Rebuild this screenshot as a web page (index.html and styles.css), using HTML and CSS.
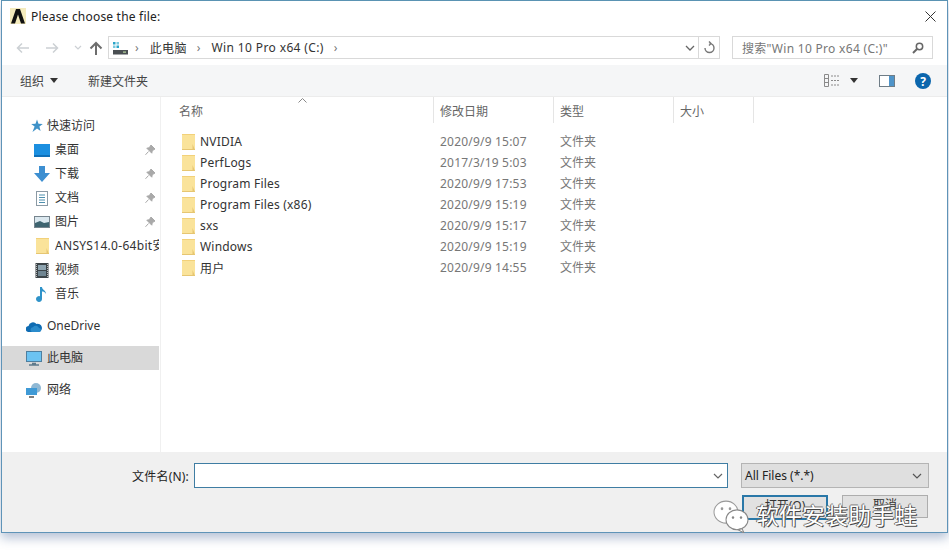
FILE: index.html
```html
<!DOCTYPE html>
<html lang="en">
<head>
    <meta charset="UTF-8">
    <meta name="viewport" content="width=device-width, initial-scale=1.0">
    <title>Please choose the file:</title>
    <link rel="stylesheet" href="styles.css">
</head>
<body>
<svg class="defs" width="0" height="0">
    <symbol id="folder" viewBox="0 0 13 16">
        <rect x="0" y="0" width="13" height="16" fill="#fae39a"/>
        <rect x="0" y="0" width="13" height="1" fill="#f2d17a"/>
        <path d="M10.500 16V10l2.500 6z" fill="#e6c672"/>
        <rect x="0" y="15" width="13" height="1" fill="#e6c672"/>
    </symbol>
    <symbol id="pin" viewBox="0 0 12 12">
        <path d="M7 1l4 4-1 .6-1.800 1.200-.4 2.400L2.800 4.200l2.400-.4L6.400 2zM4.500 7.500L1.500 10.800" fill="#a9a9a9" stroke="#a9a9a9" stroke-width="1"/>
    </symbol>
</svg>

<div class="window">
    <div class="titlebar">
        <svg class="app-icon" width="16" height="16" viewBox="0 0 16 16">
            <rect width="16" height="16" fill="#f4ebbd"/>
            <path d="M1 15.500L6 1h4l5 14.500h-4L8 6.500 5 15.500z" fill="#111"/>
        </svg>
        <span class="title">Please choose the file:</span>
        <svg class="close" width="11" height="11" viewBox="0 0 11 11">
            <path d="M.5.500l10 10M10.500.500l-10 10" stroke="#333" stroke-width="1" fill="none"/>
        </svg>
    </div>

    <div class="navrow">
        <div class="nav-buttons">
            <svg width="14" height="12" viewBox="0 0 14 12"><path d="M13 6H2M6 1.500L1.500 6 6 10.500" stroke="#ccd0d4" stroke-width="1.500" fill="none"/></svg>
            <svg width="14" height="12" viewBox="0 0 14 12"><path d="M1 6h11M8 1.500L12.500 6 8 10.500" stroke="#ccd0d4" stroke-width="1.500" fill="none"/></svg>
            <svg width="8" height="6" viewBox="0 0 8 6"><path d="M1 1l3 3 3-3" stroke="#ccd0d4" stroke-width="1.200" fill="none"/></svg>
            <svg class="up" width="14" height="14" viewBox="0 0 14 14"><path d="M7 14V2M1.500 7.500L7 2l5.500 5.500" stroke="#6d6d6d" stroke-width="2" fill="none"/></svg>
        </div>
        <div class="address">
            <svg class="drive" width="16" height="14" viewBox="0 0 16 14">
                <rect x="1" y="1" width="2.500" height="2.500" fill="#2aa5c9"/>
                <rect x="4.500" y="1" width="2.500" height="2.500" fill="#7cc9dd"/>
                <rect x="1" y="4.500" width="2.500" height="2.500" fill="#7cc9dd"/>
                <rect x="4.500" y="4.500" width="2.500" height="2.500" fill="#2aa5c9"/>
                <rect x="1" y="9" width="15" height="4.500" fill="#4a4f52"/>
                <rect x="11" y="10.500" width="3" height="1.200" fill="#b8d8a0"/>
            </svg>
            <span class="crumb-sep">›</span>
            <span class="crumb">此电脑</span>
            <span class="crumb-sep">›</span>
            <span class="crumb">Win 10 Pro x64 (C:)</span>
            <span class="crumb-sep">›</span>
            <span class="address-fill"></span>
            <svg class="chev" width="10" height="6" viewBox="0 0 10 6"><path d="M1 1l4 4 4-4" stroke="#666" stroke-width="1.300" fill="none"/></svg>
            <span class="refresh">
                <svg width="12" height="13" viewBox="0 0 12 13"><path d="M6.500 2.500A4.500 4.500 0 1 1 2 7M6 .5l2 2-2 2" stroke="#777" stroke-width="1.400" fill="none"/></svg>
            </span>
        </div>
        <div class="search">
            <span class="search-text">搜索"Win 10 Pro x64 (C:)"</span>
            <svg width="12" height="12" viewBox="0 0 12 12"><circle cx="7.500" cy="4.500" r="3.200" stroke="#666" stroke-width="1.500" fill="none"/><path d="M5 7l-4 4" stroke="#666" stroke-width="2"/></svg>
        </div>
    </div>

    <div class="toolbar">
        <span class="tool">组织</span>
        <span class="tool-arrow"></span>
        <span class="tool tool-new">新建文件夹</span>
        <span class="toolbar-fill"></span>
        <svg class="view-icon" width="16" height="13" viewBox="0 0 16 13">
            <path d="M.5.500h4v12h-4zM.5 4.500h4M.5 8.500h4" stroke="#8a8a8a" fill="none"/>
            <path d="M7 2h9M7 6.500h9M7 11h9" stroke="#8a8a8a" stroke-dasharray="2 1" fill="none"/>
        </svg>
        <span class="tool-arrow view-arrow"></span>
        <svg class="pane-icon" width="16" height="12" viewBox="0 0 16 12">
            <rect x=".5" y=".5" width="15" height="11" fill="#fff" stroke="#6f7d87"/>
            <rect x="10" y="1" width="5" height="10" fill="#4f94c9"/>
        </svg>
        <svg class="help-icon" width="16" height="16" viewBox="0 0 16 16">
            <circle cx="8" cy="8" r="8" fill="#0b66ad"/>
            <text x="8" y="12.500" text-anchor="middle" class="help-mark">?</text>
        </svg>
    </div>

    <div class="main">
        <nav class="sidebar">
            <div class="side-item top">
                <svg class="star" width="14" height="14" viewBox="0 0 14 14"><path d="M8 .5l1.500 4.200 4.300.2-3.400 2.700 1.200 4.300L8 9.500l-4.500 3.500 2.100-5.400L2.200 4.900l4.300-.2z" fill="#3f92c8"/></svg>
                <span>快速访问</span>
            </div>
            <div class="side-item sub">
                <svg width="16" height="13" viewBox="0 0 16 13"><rect width="16" height="13" fill="#1b8fe0"/><rect y="11" width="16" height="2" fill="#0e6fb8"/></svg>
                <span>桌面</span>
                <svg class="pin"><use href="#pin"/></svg>
            </div>
            <div class="side-item sub">
                <svg width="16" height="16" viewBox="0 0 16 16"><path d="M5 0h6v7h5l-8 9-8-9h5z" fill="#3d8fd1"/></svg>
                <span>下载</span>
                <svg class="pin"><use href="#pin"/></svg>
            </div>
            <div class="side-item sub">
                <svg width="16" height="15" viewBox="0 0 16 15"><rect x="2.500" y=".5" width="11" height="14" fill="#fff" stroke="#8b9aa5"/><path d="M5 4h6M5 6.500h6M5 9h6M5 11.500h6" stroke="#4d8fae"/></svg>
                <span>文档</span>
                <svg class="pin"><use href="#pin"/></svg>
            </div>
            <div class="side-item sub">
                <svg width="16" height="13" viewBox="0 0 16 13"><rect x=".5" y=".5" width="15" height="11" fill="#dbe8ef" stroke="#77858e"/><path d="M1 7l5-2 4 2 5-1v5H1z" fill="#3e6470"/></svg>
                <span>图片</span>
                <svg class="pin"><use href="#pin"/></svg>
            </div>
            <div class="side-item sub">
                <svg width="13" height="16" class="side-folder"><use href="#folder"/></svg>
                <span class="clip">ANSYS14.0-64bit安</span>
            </div>
            <div class="side-item sub">
                <svg width="16" height="15" viewBox="0 0 16 15"><rect x="1.500" width="13" height="15" fill="#3c4448"/><rect x="4" y="2" width="8" height="5" fill="#8ea4b0"/><rect x="4" y="8" width="8" height="5" fill="#6f8591"/><path d="M2.500 1v13M13.500 1v13" stroke="#bbb" stroke-dasharray="1 1"/></svg>
                <span>视频</span>
            </div>
            <div class="side-item sub">
                <svg width="16" height="17" viewBox="0 0 16 17"><path d="M6 1h2c0 3 4 3 4 7-1-2-2.500-2.500-4-2.500V13a3 3 0 1 1-2-2.800z" fill="#2f93c9"/></svg>
                <span>音乐</span>
            </div>
            <div class="side-item top group-gap">
                <svg width="16" height="11" viewBox="0 0 16 11"><path d="M3 11a3 3 0 0 1-.5-6A4.500 4.500 0 0 1 10.500 3 3.500 3.500 0 0 1 13 11z" fill="#0f6cb3"/><path d="M6 11a2.500 2.500 0 0 1 1-4.800 3.500 3.500 0 0 1 6 .8 2 2 0 0 1 0 4z" fill="#2b8ccc"/></svg>
                <span>OneDrive</span>
            </div>
            <div class="side-item top group-gap selected">
                <svg width="16" height="15" viewBox="0 0 16 15"><rect x=".5" y=".5" width="15" height="10" fill="#6cc3f2" stroke="#4f7f9f"/><path d="M6 12.500h4M3 14h10" stroke="#5e7a8c" stroke-width="1.500"/></svg>
                <span>此电脑</span>
            </div>
            <div class="side-item top group-gap">
                <svg width="16" height="16" viewBox="0 0 16 16"><circle cx="10" cy="6" r="5" fill="#8fb8d4"/><rect x="0" y="6" width="11" height="7" fill="#3f9ad6"/><path d="M3 15h5" stroke="#555" stroke-width="1.500"/></svg>
                <span>网络</span>
            </div>
        </nav>

        <section class="files">
            <div class="header">
                <span class="col col-name">名称</span>
                <span class="col col-date">修改日期</span>
                <span class="col col-type">类型</span>
                <span class="col col-size">大小</span>
            </div>
            <svg class="sort-arrow" width="9" height="5" viewBox="0 0 9 5"><path d="M.5 4.500l4-4 4 4" stroke="#888" fill="none"/></svg>
            <div class="rows">
                <div class="row"><span class="file-name"><svg width="13" height="16"><use href="#folder"/></svg>NVIDIA</span><span class="cell-date">2020/9/9 15:07</span><span class="cell-type">文件夹</span></div>
                <div class="row"><span class="file-name"><svg width="13" height="16"><use href="#folder"/></svg>PerfLogs</span><span class="cell-date">2017/3/19 5:03</span><span class="cell-type">文件夹</span></div>
                <div class="row"><span class="file-name"><svg width="13" height="16"><use href="#folder"/></svg>Program Files</span><span class="cell-date">2020/9/9 17:53</span><span class="cell-type">文件夹</span></div>
                <div class="row"><span class="file-name"><svg width="13" height="16"><use href="#folder"/></svg>Program Files (x86)</span><span class="cell-date">2020/9/9 15:19</span><span class="cell-type">文件夹</span></div>
                <div class="row"><span class="file-name"><svg width="13" height="16"><use href="#folder"/></svg>sxs</span><span class="cell-date">2020/9/9 15:17</span><span class="cell-type">文件夹</span></div>
                <div class="row"><span class="file-name"><svg width="13" height="16"><use href="#folder"/></svg>Windows</span><span class="cell-date">2020/9/9 15:19</span><span class="cell-type">文件夹</span></div>
                <div class="row"><span class="file-name"><svg width="13" height="16"><use href="#folder"/></svg>用户</span><span class="cell-date">2020/9/9 14:55</span><span class="cell-type">文件夹</span></div>
            </div>
        </section>
    </div>

    <div class="bottom">
        <div class="file-line">
            <label class="file-label">文件名(N):</label>
            <div class="file-input">
                <svg width="10" height="6" viewBox="0 0 10 6"><path d="M1 1l4 4 4-4" stroke="#666" stroke-width="1.200" fill="none"/></svg>
            </div>
            <div class="filter">
                <span>All Files (*.*)</span>
                <svg width="10" height="6" viewBox="0 0 10 6"><path d="M1 1l4 4 4-4" stroke="#555" stroke-width="1.200" fill="none"/></svg>
            </div>
        </div>
        <div class="button-line">
            <div class="btn btn-open">打开(O)</div>
            <div class="btn btn-cancel">取消</div>
        </div>
    </div>
</div>

<div class="watermark">
    <svg width="36" height="33" viewBox="0 0 36 30" preserveAspectRatio="none">
        <ellipse cx="13" cy="11" rx="12" ry="10" fill="#fff" stroke="#999"/>
        <ellipse cx="24" cy="18" rx="11" ry="9" fill="#fff" stroke="#888"/>
        <path d="M29 26l2 4-6-3z" fill="#fff" stroke="#888"/>
        <circle cx="9" cy="8" r="1.300" fill="#999"/>
        <circle cx="17" cy="8" r="1.300" fill="#999"/>
        <circle cx="20" cy="16" r="1.200" fill="#888"/>
        <circle cx="28" cy="16" r="1.200" fill="#888"/>
    </svg>
    <span class="wm-text">软件安装助手蛙</span>
</div>
</body>
</html>
```

FILE: styles.css
```css
html, body {
    margin: 0;
    padding: 0;
}

body {
    width: 949px;
    height: 557px;
    overflow: hidden;
    background: #fff;
    font-family: "Noto Sans", "Noto Sans CJK SC", sans-serif;
    font-size: 12px;
    color: #333;
    position: relative;
}

.defs {
    position: absolute;
}

.window {
    box-sizing: border-box;
    width: 947px;
    height: 533px;
    margin-left: 1px;
    border: 1px solid #5f94b8;
    border-top-color: #5a93b3;
    box-shadow: 0 5px 10px rgba(70, 100, 150, .4);
    display: flex;
    flex-direction: column;
    background: #fff;
}

.titlebar {
    height: 30px;
    flex: none;
    display: flex;
    align-items: center;
    padding: 0 11px 0 8px;
}

.app-icon {
    margin-right: 5px;
}

.title {
    flex: 1;
    letter-spacing: .2px;
    color: #222;
}

.navrow {
    height: 23px;
    margin-top: 5px;
    flex: none;
    display: flex;
    padding-right: 13px;
}

.nav-buttons {
    width: 106px;
    display: flex;
    align-items: center;
    gap: 15px;
    box-sizing: border-box;
    padding-left: 14px;
}

.nav-buttons .up {
    margin-left: -8px;
}

.address {
    box-sizing: border-box;
    width: 612px;
    border: 1px solid #d9d9d9;
    display: flex;
    align-items: center;
    padding-left: 3px;
}

.drive {
    margin-right: 7px;
}

.crumb-sep {
    color: #777;
    margin-right: 11px;
}

.crumb {
    margin-right: 10px;
    color: #333;
    letter-spacing: .37px;
}

.address-fill {
    flex: 1;
}

.chev {
    margin-right: 3px;
}

.refresh {
    width: 20px;
    height: 100%;
    border-left: 1px solid #d9d9d9;
    display: flex;
    align-items: center;
    justify-content: center;
}

.search {
    box-sizing: border-box;
    width: 201px;
    margin-left: 12px;
    border: 1px solid #d9d9d9;
    display: flex;
    align-items: center;
    justify-content: space-between;
    padding: 0 8px 0 9px;
    color: #777;
    letter-spacing: .3px;
}

.toolbar {
    height: 32px;
    margin-top: 6px;
    flex: none;
    background: #f5f6f7;
    border-bottom: 1px solid #ececec;
    box-sizing: border-box;
    display: flex;
    align-items: center;
    padding: 0 16px 0 18px;
}

.tool {
    color: #444;
}

.tool-arrow {
    width: 0;
    height: 0;
    margin-left: 6px;
    border: 4px solid transparent;
    border-top: 5px solid #333;
    border-bottom: 0;
}

.tool-new {
    margin-left: 30px;
}

.toolbar-fill {
    flex: 1;
}

.view-arrow {
    margin-left: 10px;
}

.pane-icon {
    margin-left: 21px;
}

.help-icon {
    margin-left: 20px;
}

.help-mark {
    font: bold 12px "Noto Sans", sans-serif;
    fill: #fff;
}

.main {
    flex: 1;
    min-height: 0;
    display: flex;
}

.sidebar {
    box-sizing: border-box;
    width: 159px;
    flex: none;
    border-right: 1px solid #f0f0f0;
    padding-top: 17px;
}

.side-item {
    height: 24px;
    display: flex;
    align-items: center;
    white-space: nowrap;
    overflow: hidden;
    margin-right: 1px;
}

.side-item svg {
    flex: none;
}

.side-item span {
    color: #333;
    padding-bottom: 2px;
}

.top {
    padding-left: 24px;
}

.top span {
    margin-left: 5px;
}

.top .star {
    margin-left: 3px;
    margin-right: -1px;
}

.sub {
    padding-left: 32px;
}

.sub span {
    margin-left: 5px;
    flex: 1;
}

.group-gap {
    margin-top: 8px;
}

.side-item .pin {
    width: 12px;
    height: 12px;
    margin-right: 3px;
}

.side-item .side-folder {
    margin: 0 3px 0 2px;
}

.sub .clip {
    margin-left: 3px;
    overflow: hidden;
    letter-spacing: .3px;
}

.selected {
    background: #d9d9d9;
}

.files {
    flex: 1;
    min-width: 0;
    position: relative;
}

.header {
    height: 26px;
    display: flex;
    color: #666;
}

.col {
    box-sizing: border-box;
    border-right: 1px solid #e5e5e5;
    padding-left: 6px;
    padding-top: 5px;
}

.col-name {
    width: 273px;
    padding-left: 18px;
}

.col-date {
    width: 120px;
}

.col-type {
    width: 120px;
}

.col-size {
    width: 80px;
}

.sort-arrow {
    position: absolute;
    left: 137px;
    top: 1px;
}

.rows {
    padding-top: 8px;
}

.row {
    height: 21px;
    display: grid;
    grid-template-columns: 273px 120px auto;
    align-items: center;
    color: #777;
}

.file-name {
    display: flex;
    align-items: center;
    gap: 5px;
    padding-left: 21px;
    color: #333;
    letter-spacing: .2px;
}

.cell-date {
    padding-left: 6px;
    letter-spacing: .2px;
}

.cell-type {
    padding: 0 0 2px 6px;
}

.bottom {
    height: 80px;
    flex: none;
    background: #f0f0f0;
    box-sizing: border-box;
    padding-top: 11px;
}

.file-line {
    display: flex;
    align-items: center;
    height: 25px;
}

.file-label {
    width: 192px;
    text-align: right;
    color: #222;
    padding-right: 5px;
    box-sizing: border-box;
    letter-spacing: .2px;
}

.file-input {
    box-sizing: border-box;
    width: 534px;
    height: 25px;
    background: #fff;
    border: 1px solid #3f7da3;
    display: flex;
    align-items: center;
    justify-content: flex-end;
    padding-right: 4px;
}

.filter {
    box-sizing: border-box;
    width: 188px;
    height: 25px;
    margin-left: 13px;
    background: #dfdfdf;
    border: 1px solid #b4b4b4;
    display: flex;
    align-items: center;
    justify-content: space-between;
    padding: 0 6px 0 3px;
    color: #222;
}

.button-line {
    display: flex;
    margin: 7px 0 0 740px;
    gap: 14px;
    align-items: flex-start;
}

.btn {
    box-sizing: border-box;
    width: 86px;
    display: flex;
    align-items: center;
    justify-content: center;
    padding-bottom: 6px;
    color: #333;
    background: #e1e1e1;
}

.btn-open {
    height: 25px;
    border: 2px solid #2a78a8;
}

.btn-cancel {
    height: 23px;
    border: 1px solid #adadad;
}

.watermark {
    position: absolute;
    left: 713px;
    top: 497px;
    display: flex;
    align-items: center;
    gap: 7px;
}

.wm-text {
    font-size: 23px;
    color: #fff;
    white-space: nowrap;
    padding-bottom: 4px;
    text-shadow: 1px 1px 0 #444, -1px 0 0 #666, 0 -1px 0 #777;
}
```
